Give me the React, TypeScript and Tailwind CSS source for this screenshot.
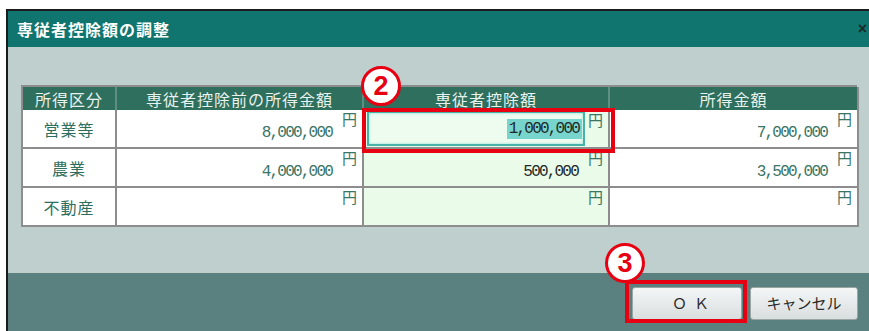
import React from "react";

const JP = "font-['Noto_Sans_CJK_JP','Noto_Sans',sans-serif]";
const MONO = "font-['Liberation_Mono',monospace]";

type Row = { label: string; before: string; deduct: string; income: string };

const ROWS: Row[] = [
  { label: "営業等", before: "8,000,000", deduct: "1,000,000", income: "7,000,000" },
  { label: "農業", before: "4,000,000", deduct: "500,000", income: "3,500,000" },
  { label: "不動産", before: "", deduct: "", income: "" },
];

function Yen({ value, dark = false }: { value: string; dark?: boolean }) {
  return (
    <div className="flex h-full items-start justify-end pr-[4px]">
      <span
        className={`${MONO} mt-[14px] text-[16px] leading-[18px] tracking-[-1.8px] ${dark ? "text-[#1f2a28]" : "text-[#3a7566]"}`}
      >
        {value}
      </span>
      <span className={`${JP} ml-[10px] mt-[1px] text-[15px] leading-[16px] text-[#3a7566]`}>円</span>
    </div>
  );
}

function Badge({ n }: { n: string }) {
  return (
    <div className="flex h-[40px] w-[40px] items-center justify-center rounded-full border-[3px] border-[#e60012] bg-white">
      <span className="font-['Liberation_Sans',sans-serif] text-[27px] font-bold leading-none text-[#e60012]">{n}</span>
    </div>
  );
}

export default function App() {
  return (
    <div className="relative h-[331px] w-[869px] overflow-hidden bg-white pl-[6px] pt-[9px]">
      <div className="flex h-[322px] w-[870px] flex-col border-l-2 border-t-2 border-[#1c1c1c]">
        {/* title bar */}
        <div className="flex h-[36px] items-center bg-[#10756f] pl-[9px] pr-[9px]">
          <span className={`${JP} text-[16px] font-bold tracking-[1px] text-white`}>専従者控除額の調整</span>
          <span className="ml-auto font-['Liberation_Sans',sans-serif] text-[16px] font-bold text-[#1d2b2a]">×</span>
        </div>

        {/* body */}
        <div className="flex-1 bg-[#bfcfce] pl-[13px] pt-[38px]">
          <div className={`${JP} grid w-[836px] grid-cols-[94px_247px_246px_249px] border-l-2 border-t-2 border-[#8d8d8d] text-[16px] tracking-[1px]`}>
            <div className="flex h-[23px] items-center justify-center border-r-2 border-[#5f8f82] bg-[#2f6f5d] leading-none text-[#e8f2ee]">所得区分</div>
            <div className="flex h-[23px] items-center justify-center border-r-2 border-[#5f8f82] bg-[#2f6f5d] leading-none text-[#e8f2ee]">専従者控除前の所得金額</div>
            <div className="flex h-[23px] items-center justify-center border-r-2 border-[#5f8f82] bg-[#2f6f5d] leading-none text-[#e8f2ee]">専従者控除額</div>
            <div className="flex h-[23px] items-center justify-center border-r-2 border-[#8d8d8d] bg-[#2f6f5d] leading-none text-[#e8f2ee]">所得金額</div>
            {ROWS.map((r, i) => (
              <React.Fragment key={r.label}>
                <div className="flex h-[39px] items-center justify-center border-b-2 border-r-2 border-[#8d8d8d] bg-white text-[#2e6e5e]">
                  {r.label}
                </div>
                <div className="h-[39px] border-b-2 border-r-2 border-[#8d8d8d] bg-white">
                  <Yen value={r.before} />
                </div>
                <div className="h-[39px] border-b-2 border-r-2 border-[#8d8d8d] bg-[#eafbea]">
                  {i === 0 ? (
                    <div className="flex h-full items-start pl-[3px] pr-[4px] pt-[1px]">
                      <div className="flex h-[35px] flex-1 items-center justify-end border-2 border-[#47b3a8] bg-[#eefcf0] pr-[1px] shadow-[inset_0_0_3px_#8fd9cf]">
                        <span className={`${MONO} bg-[#78d5cd] pl-[2px] pr-[3px] text-[16px] leading-[20px] tracking-[-1.8px] text-[#1f2a28]`}>{r.deduct}</span>
                      </div>
                      <span className={`${JP} ml-[3px] mt-[1px] text-[15px] leading-[16px] text-[#3a7566]`}>円</span>
                    </div>
                  ) : (
                    <Yen value={r.deduct} dark />
                  )}
                </div>
                <div className="h-[39px] border-b-2 border-r-2 border-[#8d8d8d] bg-white">
                  <Yen value={r.income} />
                </div>
              </React.Fragment>
            ))}
          </div>
        </div>

        {/* footer */}
        <div className="flex h-[58px] items-start justify-end gap-[8px] bg-[#5a817f] pr-[18px] pt-[14px]">
          <button className={`${JP} h-[33px] w-[110px] rounded-[3px] border border-[#9aa5a4] bg-gradient-to-b from-[#f4f6f6] to-[#d9dede] pl-[14px] text-[15px] tracking-[7px] text-[#2b2b2b]`}>
            ＯＫ
          </button>
          <button className={`${JP} h-[33px] w-[108px] rounded-[3px] border border-[#9aa5a4] bg-gradient-to-b from-[#f4f6f6] to-[#d9dede] text-[15px] text-[#2b2b2b]`}>
            キャンセル
          </button>
        </div>
      </div>

      {/* annotations */}
      <div className="absolute left-[362px] top-[108px] h-[45px] w-[253px] border-4 border-[#e60012]" />
      <div className="absolute left-[361px] top-[66px]">
        <Badge n="2" />
      </div>
      <div className="absolute left-[625px] top-[280px] h-[43px] w-[122px] border-4 border-[#e60012]" />
      <div className="absolute left-[605px] top-[243px]">
        <Badge n="3" />
      </div>
    </div>
  );
}
